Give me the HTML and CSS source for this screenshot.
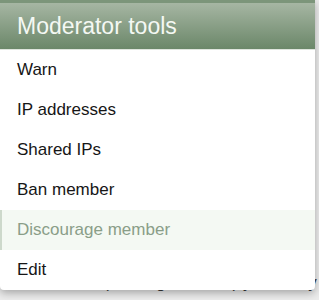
FILE: index.html
```html
<!DOCTYPE html>
<html lang="en">

<head>
  <meta charset="UTF-8">
  <meta name="viewport" content="width=device-width, initial-scale=1.0">
  <title>Moderator tools</title>
  <link rel="stylesheet" href="styles.css">
</head>

<body>
  <div class="page">
    <p class="page-line">Last seen, (viewing a thread) yesterday</p>
  </div>

  <div class="menu">
    <h3 class="menu-header">Moderator tools</h3>
    <ul class="menu-list">
      <li><a class="menu-link" href="#">Warn</a></li>
      <li><a class="menu-link" href="#">IP addresses</a></li>
      <li><a class="menu-link" href="#">Shared IPs</a></li>
      <li><a class="menu-link" href="#">Ban member</a></li>
      <li><a class="menu-link is-hover" href="#">Discourage member</a></li>
      <li><a class="menu-link" href="#">Edit</a></li>
    </ul>
  </div>
</body>

</html>
```

FILE: styles.css
```css
body {
  font-family: 'Liberation Sans', Arial, sans-serif;
  background-color: #ececec;
  margin: 0;
  padding: 0;
  width: 319px;
  height: 300px;
  overflow: hidden;
}

.page {
  padding-top: 273px;
  padding-left: 20px;
}

.page-line {
  margin: 0;
  font-size: 17px;
  line-height: 20px;
  white-space: nowrap;
  color: #3a3a3a;
}

.menu {
  position: absolute;
  top: 0;
  left: 0;
  width: 315px;
  background-color: #fff;
  border-radius: 0 0 4px 4px;
  box-shadow: 0 3px 8px rgba(0, 0, 0, 0.3);
  overflow: hidden;
}

.menu-header {
  margin: 0;
  height: 46px;
  line-height: 46px;
  padding: 0 17px;
  border-top: 3px solid #7c957a;
  border-bottom: 1px solid #dfe5de;
  background: linear-gradient(to bottom, #a6b6a3, #6b8769);
  color: #f4f8f3;
  font-size: 23px;
  font-weight: normal;
}

.menu-list {
  list-style: none;
  margin: 0;
  padding: 0;
}

.menu-link {
  display: block;
  height: 40px;
  line-height: 40px;
  padding-left: 17px;
  border-left: 2px solid transparent;
  margin-left: -2px;
  font-size: 17px;
  color: #161616;
  text-decoration: none;
}

.menu-link.is-hover {
  margin-left: 0;
  padding-left: 15px;
  border-left-color: #cdd9cb;
  background-color: #f4f9f3;
  color: #8a9e88;
}
```
